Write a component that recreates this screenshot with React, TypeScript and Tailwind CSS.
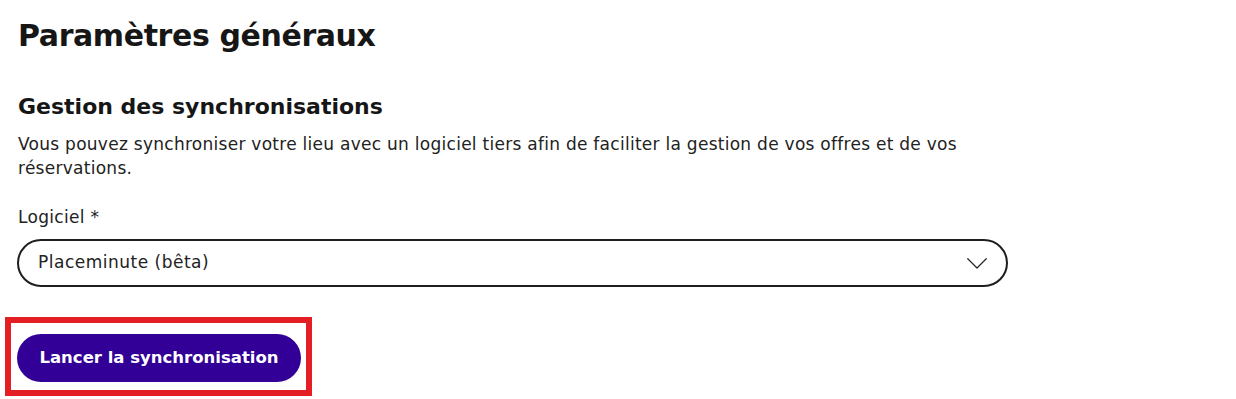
import React from "react";

export default function App() {
  return (
    <div
      className="min-h-[399px] w-full bg-white pl-[18px] pt-[16px] text-[#161616]"
      style={{ fontFamily: "'DejaVu Sans', 'Noto Sans', sans-serif" }}
    >
      <h1 className="h-[40px] text-[30px] font-bold leading-[40px] tracking-[-0.4px]">
        Paramètres généraux
      </h1>
      <h2 className="mt-[36px] text-[22px] font-bold leading-[30px]">
        Gestion des synchronisations
      </h2>
      <p className="mt-[10px] w-[1000px] text-[17px] leading-[24px] tracking-[0.27px] text-[#222]">
        Vous pouvez synchroniser votre lieu avec un logiciel tiers afin de faciliter la gestion de vos offres et de vos
        <br />
        réservations.
      </p>
      <label className="mt-[25px] block text-[17px] leading-[24px] tracking-[0.3px] text-[#222]">Logiciel *</label>
      <div className="ml-[-1px] mt-[10px] flex h-[48px] w-[991px] items-center justify-between rounded-full border-2 border-[#1e1e1e] pl-[19px] pr-[19px]">
        <span className="text-[17px] tracking-[0.5px] text-[#222]">Placeminute (bêta)</span>
        <svg width="20" height="11" viewBox="0 0 20 11" fill="none">
          <path d="M0.75 0.75 L10 10 L19.25 0.75" stroke="#222" strokeWidth="1.2" strokeLinecap="round" strokeLinejoin="round" />
        </svg>
      </div>
      <div className="relative ml-[-1px] mt-[47px] inline-block">
        <button className="flex h-[48px] w-[284px] items-center justify-center rounded-full bg-[#320096] text-[16.5px] font-bold text-white">
          Lancer la synchronisation
        </button>
        <span className="pointer-events-none absolute bottom-[-14px] left-[-12px] right-[-11px] top-[-17px] border-[6px] border-[#e31e24]" />
      </div>
    </div>
  );
}
